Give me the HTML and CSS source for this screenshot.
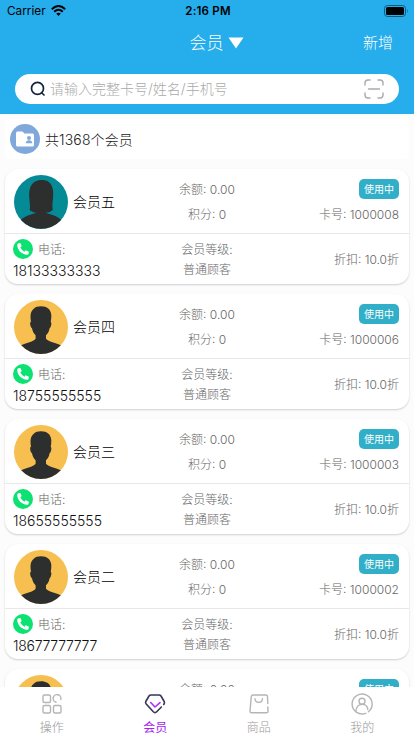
FILE: index.html
```html
<!DOCTYPE html>
<html lang="zh-CN">
<head>
<meta charset="utf-8">
<meta name="viewport" content="width=device-width, initial-scale=1">
<title>会员</title>
<link rel="stylesheet" href="styles.css">
</head>
<body>
<svg class="defs" aria-hidden="true">
  <symbol id="avatar-man" viewBox="0 0 54 54">
    <circle cx="27" cy="27" r="27" fill="#f6bf4f"/>
    <path d="M7.200 45.300C9.500 43.800 20.200 41.600 21.600 38.800V35.200C19.700 33.400 18.500 31 18 28.200C16.500 27.400 15.800 24 16.300 22.200L17 21.800C16 16 16.400 11.500 19.500 9C21 7 24 6.300 27.200 6.300C33 6.300 36.600 9.500 37.200 14.200C37.500 17 37.100 20 36.700 21.800C38 22.600 37.200 27 35.600 28.200C35.100 31 34 33.400 32 35.200V38.800C33.800 41.600 44.500 43.800 46.800 45.300A27 27 0 0 1 7.200 45.300Z" fill="#2c2f2e"/>
  </symbol>
  <symbol id="avatar-woman" viewBox="0 0 54 54">
    <circle cx="27" cy="27" r="27" fill="#058b96"/>
    <path d="M7 45C9.500 41.500 16 39.500 22.500 37.700C19.500 37.500 17 36.500 15.700 35C16.700 29 14.700 24 15.200 18C15.700 10 20 5 27.200 5C31 5 32.500 5.500 34 6.500C38 9 39.500 14 39.200 20C39 26 37.800 30 38.800 35C37.200 36.700 34.500 37.600 31.500 37.700C38 39.500 44.500 41.500 47 45A27 27 0 0 1 7 45Z" fill="#2c2f2e"/>
  </symbol>
  <symbol id="phone" viewBox="0 0 20 20">
    <circle cx="10" cy="10" r="10" fill="#0be272"/>
    <path d="M5.500 4.300L7 4Q7.500 4 7.700 4.500L8.600 6.800Q8.700 7.200 8.300 7.600L7.300 8.600Q8.700 11.300 11.400 12.700L12.400 11.600Q12.800 11.200 13.200 11.400L15.500 12.400Q16 12.700 15.900 13.200L15.600 14.700Q15.400 15.800 14.100 15.700C8.500 15.200 4.400 11 4.200 5.900Q4.200 4.700 5.500 4.300Z" fill="#fff"/>
  </symbol>
</svg>
<div class="app">
  <header class="header">
    <div class="status">
      <div class="carrier">Carrier
        <svg width="15" height="11" viewBox="0 0 15 11"><g fill="none" stroke="#000" stroke-width="2"><path d="M.8 4.200Q7.500-2.200 14.200 4.200"/><path d="M3.200 6.700Q7.500 2.700 11.800 6.700"/></g><path d="M7.500 10.900L5.200 8.600Q7.500 6.700 9.800 8.600Z"/></svg>
      </div>
      <div class="time">2:16 PM</div>
      <svg class="battery" width="25" height="12" viewBox="0 0 25 12"><rect x=".5" y=".5" width="21" height="11" rx="3" fill="none" stroke="#12587c"/><rect x="2" y="2" width="18" height="8" rx="1.600"/><path d="M23 4Q24.500 6 23 8Z" fill="#12587c"/></svg>
    </div>
    <div class="titlebar">
      <h1 class="title">会员 <svg width="16" height="12" viewBox="0 0 16 12"><path d="M.5.500H15.500L8 11.500Z" fill="#fff"/></svg></h1>
      <span class="add">新增</span>
    </div>
    <div class="search">
      <svg width="16" height="16" viewBox="0 0 16 16" fill="none" stroke="#15233f" stroke-width="1.700" stroke-linecap="round"><circle cx="7.500" cy="7.400" r="6"/><path d="M11.900 12L14 14"/></svg>
      <span class="placeholder">请输入完整卡号/姓名/手机号</span>
      <svg width="20" height="20" viewBox="0 0 20 20" fill="none" stroke="#aaa" stroke-width="1.400" stroke-linecap="round"><path d="M1 6V4Q1 1 4 1H6M14 1H16Q19 1 19 4V6M19 14V16Q19 19 16 19H14M6 19H4Q1 19 1 16V14M4.500 10H15.500"/></svg>
    </div>
  </header>
  <main class="list">
    <div class="count">
      <svg width="30" height="30" viewBox="0 0 30 30"><circle cx="15" cy="15" r="15" fill="#81a8db"/><path d="M6 9Q6 7.500 7.500 7.500H12Q13 7.500 13.500 8.500L14.200 9.500H22.500Q24 9.500 24 11V21Q24 22.500 22.500 22.500H7.500Q6 22.500 6 21Z" fill="#fff"/><circle cx="19" cy="14" r="2" fill="#81a8db"/><path d="M15.700 19.200Q16 16.300 19 16.300T22.300 19.200Z" fill="#81a8db"/></svg>
      <span>共1368个会员</span>
    </div>

    <article class="card">
      <div class="row top">
        <div class="person"><svg class="avatar"><use href="#avatar-woman"/></svg><span class="name">会员五</span></div>
        <div class="mid"><span>余额: 0.00</span><span>积分: 0</span></div>
        <div class="side"><span class="badge">使用中</span><span>卡号: 1000008</span></div>
      </div>
      <div class="row bottom">
        <div class="tel"><div class="tel-label"><svg class="phone"><use href="#phone"/></svg><span>电话:</span></div><div class="number">18133333333</div></div>
        <div class="mid"><span>会员等级:</span><span>普通顾客</span></div>
        <div class="side"><span>折扣: 10.0折</span></div>
      </div>
    </article>

    <article class="card">
      <div class="row top">
        <div class="person"><svg class="avatar"><use href="#avatar-man"/></svg><span class="name">会员四</span></div>
        <div class="mid"><span>余额: 0.00</span><span>积分: 0</span></div>
        <div class="side"><span class="badge">使用中</span><span>卡号: 1000006</span></div>
      </div>
      <div class="row bottom">
        <div class="tel"><div class="tel-label"><svg class="phone"><use href="#phone"/></svg><span>电话:</span></div><div class="number">18755555555</div></div>
        <div class="mid"><span>会员等级:</span><span>普通顾客</span></div>
        <div class="side"><span>折扣: 10.0折</span></div>
      </div>
    </article>

    <article class="card">
      <div class="row top">
        <div class="person"><svg class="avatar"><use href="#avatar-man"/></svg><span class="name">会员三</span></div>
        <div class="mid"><span>余额: 0.00</span><span>积分: 0</span></div>
        <div class="side"><span class="badge">使用中</span><span>卡号: 1000003</span></div>
      </div>
      <div class="row bottom">
        <div class="tel"><div class="tel-label"><svg class="phone"><use href="#phone"/></svg><span>电话:</span></div><div class="number">18655555555</div></div>
        <div class="mid"><span>会员等级:</span><span>普通顾客</span></div>
        <div class="side"><span>折扣: 10.0折</span></div>
      </div>
    </article>

    <article class="card">
      <div class="row top">
        <div class="person"><svg class="avatar"><use href="#avatar-man"/></svg><span class="name">会员二</span></div>
        <div class="mid"><span>余额: 0.00</span><span>积分: 0</span></div>
        <div class="side"><span class="badge">使用中</span><span>卡号: 1000002</span></div>
      </div>
      <div class="row bottom">
        <div class="tel"><div class="tel-label"><svg class="phone"><use href="#phone"/></svg><span>电话:</span></div><div class="number narrow">18677777777</div></div>
        <div class="mid"><span>会员等级:</span><span>普通顾客</span></div>
        <div class="side"><span>折扣: 10.0折</span></div>
      </div>
    </article>

    <article class="card">
      <div class="row top">
        <div class="person"><svg class="avatar"><use href="#avatar-man"/></svg></div>
        <div class="mid"><span>余额: 0.00</span></div>
        <div class="side"><span class="badge">使用中</span></div>
      </div>
    </article>
  </main>
  <nav class="tabs">
    <div class="tab">
      <svg width="22" height="22" viewBox="0 0 22 22" fill="none" stroke="#b5b5b5" stroke-width="1.400" stroke-linecap="round"><rect x="2" y="2" width="7.500" height="7.500" rx="1.500"/><path d="M15 9.300A3.900 3.900 0 1 1 19.800 6.500"/><rect x="2" y="12.500" width="7.500" height="7.500" rx="1.500"/><rect x="12.500" y="12.500" width="7.500" height="7.500" rx="1.500"/></svg>
      <span>操作</span>
    </div>
    <div class="tab active">
      <svg width="22" height="22" viewBox="0 0 22 22" fill="none" stroke-width="1.600" stroke-linecap="round" stroke-linejoin="round"><path d="M19.700 11.500L20.300 10.500Q20.700 9.500 20.200 8.500L17 3Q16.300 2 15 2H7Q5.700 2 5 3L1.800 8.500Q1.200 9.500 2 10.700L9.300 18.800Q11 20.500 12.700 18.800L17.400 14" stroke="#343756"/><path d="M6.700 9.500L11 14L16 9.700" stroke="#b22df5"/></svg>
      <span>会员</span>
    </div>
    <div class="tab">
      <svg width="22" height="22" viewBox="0 0 22 22" fill="none" stroke="#b5b5b5" stroke-width="1.400" stroke-linecap="round"><path d="M19.800 10.500L19.500 3.500Q19.400 2 17.800 2H5Q3.400 2 3.300 3.500L2 18Q1.900 19.700 3.600 19.700H18.400Q20.100 19.700 20 18L19.800 14M7 5.700Q7.300 9.300 10.800 9.300T14.500 5.700"/></svg>
      <span>商品</span>
    </div>
    <div class="tab">
      <svg width="22" height="22" viewBox="0 0 22 22" fill="none" stroke="#b5b5b5" stroke-width="1.400" stroke-linecap="round"><path d="M17.500 18.700A10 10 0 1 0 14.800 20.300"/><circle cx="11" cy="8.300" r="3"/><path d="M4.800 18.500Q5.500 11.400 11 11.400T16.800 16.500"/></svg>
      <span>我的</span>
    </div>
  </nav>
</div>
</body>
</html>
```

FILE: styles.css
```css
* { box-sizing: border-box; }
body {
  margin: 0;
  font-family: Inter, "Noto Sans CJK SC", sans-serif;
  font-size: 12px;
  font-weight: 300;
  color: #666;
}
svg { display: block; flex: none; }
.defs { position: absolute; width: 0; height: 0; }
.app {
  width: 414px;
  height: 736px;
  display: flex;
  flex-direction: column;
  overflow: hidden;
  background: #fcfcfc;
}

.header { flex: none; height: 114px; background: #26adec; }
.status {
  display: grid;
  grid-template-columns: 1fr auto 1fr;
  align-items: center;
  height: 21px;
  padding: 0 5px 0 7px;
  color: #000;
  font-weight: 400;
}
.carrier { display: flex; align-items: center; gap: 5px; font-size: 11.800px; }
.time { font-size: 11.500px; font-weight: 600; letter-spacing: .2px; }
.battery { justify-self: end; }
.titlebar {
  display: grid;
  grid-template-columns: 1fr auto 1fr;
  align-items: center;
  height: 43px;
  padding: 0 21px;
  color: #fff;
}
.title {
  grid-column: 2;
  display: flex;
  align-items: center;
  gap: 4px;
  margin: 0 0 0 19px;
  font-size: 17px;
  font-weight: 300;
  line-height: 24px;
}
.add { justify-self: end; font-size: 15px; line-height: 24px; }
.search {
  display: flex;
  align-items: center;
  height: 30px;
  margin: 10px 15px 0;
  padding: 0 15px;
  border-radius: 15px;
  background: #fff;
}
.placeholder {
  flex: 1;
  margin-left: 4px;
  font-size: 14px;
  line-height: 20px;
  color: #aaa;
}

.list { flex: 1; min-height: 0; overflow: hidden; padding: 5px 5px 0; }
.count {
  display: flex;
  align-items: center;
  gap: 5px;
  height: 40px;
  margin-bottom: 10px;
  padding-left: 5px;
  border-radius: 5px;
  background: #fff;
  color: #222;
  font-size: 14px;
  letter-spacing: .12px;
}
.card {
  height: 115px;
  margin-bottom: 10px;
  border-radius: 13px;
  background: #fff;
  box-shadow: 0 1px 2px rgba(0, 0, 0, .18);
}
.row { display: grid; grid-template-columns: 1fr 1fr 1fr; }
.top { height: 65px; border-bottom: 1px solid #e8e8e8; }
.bottom { height: 50px; }
.person { display: flex; align-items: center; gap: 5px; height: 64px; padding: 1px 0 0 9px; }
.avatar { width: 54px; height: 54px; }
.name { margin-bottom: 1px; color: #000; font-size: 14px; }
.mid, .side { display: flex; flex-direction: column; align-items: center; white-space: nowrap; }
.top .mid { padding-top: 11px; gap: 5px; line-height: 20px; }
.top .side { padding-top: 10px; gap: 6px; line-height: 20px; }
.bottom .mid { padding-top: 6px; line-height: 20px; }
.row .side { align-items: flex-end; padding-right: 10px; }
.bottom .side { justify-content: center; padding-bottom: 2px; }
.badge {
  width: 40px;
  height: 20px;
  border-radius: 5px;
  background: #32afc8;
  color: #fff;
  font-size: 10px;
  font-weight: 400;
  text-align: center;
}
.tel { padding: 5px 0 0 8px; }
.tel-label { display: flex; align-items: center; gap: 5px; height: 20px; }
.tel-label span { margin-bottom: 2px; }
.phone { width: 20px; height: 20px; }
.number { color: #111; font-size: 14px; line-height: 24px; }
.narrow { letter-spacing: -.28px; }

.tabs {
  flex: none;
  display: grid;
  grid-template-columns: repeat(4, 1fr);
  height: 49px;
  background: #fff;
}
.tab {
  display: flex;
  flex-direction: column;
  align-items: center;
  gap: 4px;
  padding-top: 6px;
  color: #999;
  font-size: 12px;
  line-height: 18px;
}
.active { color: #a722ef; font-weight: 400; }
```
